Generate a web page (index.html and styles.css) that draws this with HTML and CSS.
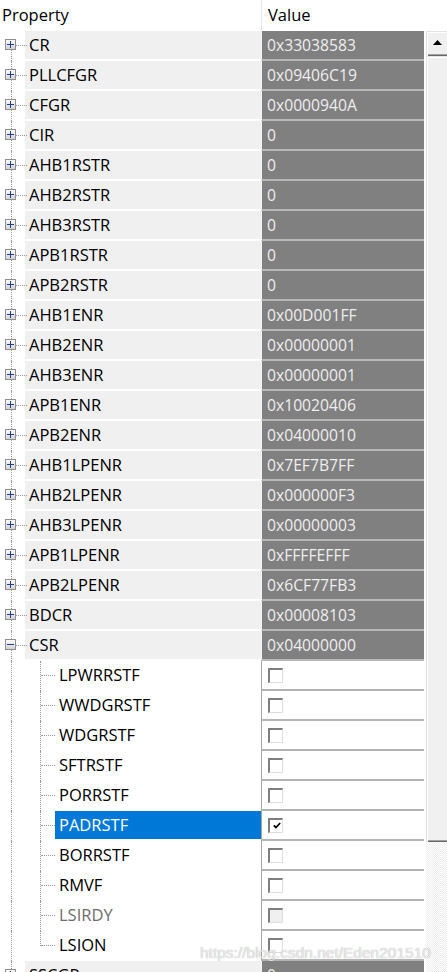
FILE: index.html
```html
<!DOCTYPE html>
<html>
<head>
<meta charset="utf-8">
<link rel="stylesheet" href="styles.css">
</head>
<body>
<div class="grid">
  <div class="header">
    <div class="h-prop">Property</div>
    <div class="h-val">Value</div>
  </div>
  <div class="body">
    <div class="rows">
      <div class="row first"><div class="tree"><span class="box plus"></span></div><div class="name">CR</div><div class="val">0x33038583</div></div>
      <div class="row"><div class="tree"><span class="box plus"></span></div><div class="name">PLLCFGR</div><div class="val">0x09406C19</div></div>
      <div class="row"><div class="tree"><span class="box plus"></span></div><div class="name">CFGR</div><div class="val">0x0000940A</div></div>
      <div class="row"><div class="tree"><span class="box plus"></span></div><div class="name">CIR</div><div class="val">0</div></div>
      <div class="row"><div class="tree"><span class="box plus"></span></div><div class="name">AHB1RSTR</div><div class="val">0</div></div>
      <div class="row"><div class="tree"><span class="box plus"></span></div><div class="name">AHB2RSTR</div><div class="val">0</div></div>
      <div class="row"><div class="tree"><span class="box plus"></span></div><div class="name">AHB3RSTR</div><div class="val">0</div></div>
      <div class="row"><div class="tree"><span class="box plus"></span></div><div class="name">APB1RSTR</div><div class="val">0</div></div>
      <div class="row"><div class="tree"><span class="box plus"></span></div><div class="name">APB2RSTR</div><div class="val">0</div></div>
      <div class="row"><div class="tree"><span class="box plus"></span></div><div class="name">AHB1ENR</div><div class="val">0x00D001FF</div></div>
      <div class="row"><div class="tree"><span class="box plus"></span></div><div class="name">AHB2ENR</div><div class="val">0x00000001</div></div>
      <div class="row"><div class="tree"><span class="box plus"></span></div><div class="name">AHB3ENR</div><div class="val">0x00000001</div></div>
      <div class="row"><div class="tree"><span class="box plus"></span></div><div class="name">APB1ENR</div><div class="val">0x10020406</div></div>
      <div class="row"><div class="tree"><span class="box plus"></span></div><div class="name">APB2ENR</div><div class="val">0x04000010</div></div>
      <div class="row"><div class="tree"><span class="box plus"></span></div><div class="name">AHB1LPENR</div><div class="val">0x7EF7B7FF</div></div>
      <div class="row"><div class="tree"><span class="box plus"></span></div><div class="name">AHB2LPENR</div><div class="val">0x000000F3</div></div>
      <div class="row"><div class="tree"><span class="box plus"></span></div><div class="name">AHB3LPENR</div><div class="val">0x00000003</div></div>
      <div class="row"><div class="tree"><span class="box plus"></span></div><div class="name">APB1LPENR</div><div class="val">0xFFFFEFFF</div></div>
      <div class="row"><div class="tree"><span class="box plus"></span></div><div class="name">APB2LPENR</div><div class="val">0x6CF77FB3</div></div>
      <div class="row"><div class="tree"><span class="box plus"></span></div><div class="name">BDCR</div><div class="val">0x00008103</div></div>
      <div class="row"><div class="tree"><span class="box"></span></div><div class="name">CSR</div><div class="val">0x04000000</div></div>

      <div class="row child"><div class="tree"><span class="hl"></span></div><div class="name">LPWRRSTF</div><div class="val"><span class="cb"></span></div></div>
      <div class="row child"><div class="tree"><span class="hl"></span></div><div class="name">WWDGRSTF</div><div class="val"><span class="cb"></span></div></div>
      <div class="row child"><div class="tree"><span class="hl"></span></div><div class="name">WDGRSTF</div><div class="val"><span class="cb"></span></div></div>
      <div class="row child"><div class="tree"><span class="hl"></span></div><div class="name">SFTRSTF</div><div class="val"><span class="cb"></span></div></div>
      <div class="row child"><div class="tree"><span class="hl"></span></div><div class="name">PORRSTF</div><div class="val"><span class="cb"></span></div></div>
      <div class="row child selected"><div class="tree"><span class="hl"></span></div><div class="name">PADRSTF</div><div class="val"><span class="cb"><svg class="check" width="8" height="7" viewBox="0 0 8 7"><path d="M0.8 3.4 L2.9 5.6 L7.2 1.0" fill="none" stroke="#000" stroke-width="1.7"/></svg></span></div></div>
      <div class="row child"><div class="tree"><span class="hl"></span></div><div class="name">BORRSTF</div><div class="val"><span class="cb"></span></div></div>
      <div class="row child"><div class="tree"><span class="hl"></span></div><div class="name">RMVF</div><div class="val"><span class="cb"></span></div></div>
      <div class="row child disabled"><div class="tree"><span class="hl"></span></div><div class="name">LSIRDY</div><div class="val"><span class="cb"></span></div></div>
      <div class="row child last"><div class="tree"><span class="hl"></span></div><div class="name">LSION</div><div class="val"><span class="cb"></span></div></div>

      <div class="row"><div class="tree"><span class="box plus"></span></div><div class="name">SSCGR</div><div class="val">0</div></div>
    </div>
    <div class="scrollbar">
      <div class="sb-btn"><svg width="9" height="5" viewBox="0 0 9 5"><polygon points="0,5 9,5 4.5,0" fill="#000"/></svg></div>
      <div class="sb-thumb"></div>
      <div class="sb-track"></div>
    </div>
  </div>
  <div class="watermark">https://blog.csdn.net/Eden201510</div>
</div>
</body>
</html>
```

FILE: styles.css
```css
html, body {
  margin: 0;
  padding: 0;
  background: #fff;
}

.grid {
  position: relative;
  width: 447px;
  height: 972px;
  overflow: hidden;
  font-family: "Open Sans", "Noto Sans", sans-serif;
  color: #000;
}

.header {
  display: flex;
  height: 31px;
  line-height: 29px;
  font-size: 16.5px;
}

.h-prop {
  box-sizing: border-box;
  width: 262px;
  padding-left: 2px;
  border-right: 1px solid #e5e5e5;
}

.h-val {
  padding-left: 6px;
}

.body {
  display: flex;
  align-items: flex-start;
}

.rows {
  width: 424px;
  flex: none;
}

.row {
  display: flex;
  align-items: flex-start;
  height: 30px;
}

.tree {
  position: relative;
  flex: none;
  width: 25px;
  height: 30px;
}

.tree::before {
  content: "";
  position: absolute;
  left: 11px;
  top: 0;
  bottom: 0;
  border-left: 1px dotted #9a9a9a;
}

.row.first .tree::before {
  top: 14px;
}

.tree::after {
  content: "";
  position: absolute;
  left: 16px;
  width: 11px;
  top: 14px;
  border-top: 1px dotted #9a9a9a;
}

.box {
  position: absolute;
  left: 5px;
  top: 8px;
  width: 11px;
  height: 11px;
  box-sizing: border-box;
  border: 1px solid #8f8f8f;
  background: linear-gradient(#fbfbfb, #d2d2d2);
  z-index: 1;
}

.box::before {
  content: "";
  position: absolute;
  left: 1px;
  top: 4px;
  width: 7px;
  height: 1px;
  background: #1f3d8c;
}

.box.plus::after {
  content: "";
  position: absolute;
  left: 4px;
  top: 1px;
  width: 1px;
  height: 7px;
  background: #1f3d8c;
}

.name {
  flex: none;
  box-sizing: border-box;
  width: 236px;
  height: 28px;
  line-height: 28px;
  padding-left: 4px;
  font-size: 16.5px;
  background: #f0f0f0;
  white-space: nowrap;
  overflow: hidden;
}

.val {
  flex: none;
  box-sizing: border-box;
  width: 163px;
  height: 30px;
  line-height: 28px;
  padding-left: 5px;
  font-size: 15.7px;
  background: #808080;
  color: #eeeeee;
  border-left: 1px solid #f4f4f4;
  border-bottom: 2px solid #b8b8b8;
  white-space: nowrap;
}

/* child rows */
.row.child .tree {
  width: 55px;
}

.row.child .tree::after {
  left: 40px;
  top: 0;
  bottom: 0;
  width: 0;
  border-top: none;
  border-left: 1px dotted #9a9a9a;
}

.row.child.last .tree::after {
  bottom: 15px;
}

.hl {
  position: absolute;
  left: 41px;
  top: 14px;
  width: 14px;
  border-top: 1px dotted #9a9a9a;
}

.row.child .name {
  width: 206px;
  background: #fff;
}

.row.child.selected .name {
  background: #0078d7;
  color: #fff;
}

.row.child.disabled .name {
  color: #6d6d6d;
}

.row.child .val {
  display: flex;
  align-items: center;
  height: 30px;
  padding-left: 6px;
  padding-bottom: 0;
  background: #fff;
  border-left: 1px solid #a6a6a6;
  border-bottom: 2px solid #b4b4b4;
}

.cb {
  display: flex;
  align-items: center;
  justify-content: center;
  box-sizing: border-box;
  width: 15px;
  height: 15px;
  padding-left: 2px;
  background: #fff;
  border-top: 2px solid #7f7f7f;
  border-left: 2px solid #7f7f7f;
  border-right: 1px solid #dedede;
  border-bottom: 1px solid #dedede;
}

.row.child.disabled .cb {
  background: #f0f0f0;
}

/* scrollbar */
.scrollbar {
  flex: none;
  margin-left: 2px;
  width: 21px;
  height: 941px;
  display: flex;
  flex-direction: column;
}

.sb-btn {
  flex: none;
  height: 25px;
  display: flex;
  align-items: center;
  justify-content: center;
  padding-left: 2px;
  padding-bottom: 2px;
  box-sizing: border-box;
  background: #f0f0f0;
  box-shadow: inset 1px 1px #e3e3e3, inset 2px 2px #fff, inset 0 -1px #696969, inset 0 -2px #a0a0a0;
}

.sb-thumb {
  flex: none;
  height: 786px;
  background: #f0f0f0;
  box-shadow: inset 1px 1px #e3e3e3, inset 2px 2px #fff, inset 0 -1px #696969, inset 0 -2px #a0a0a0;
}

.sb-track {
  flex: 1;
  background: repeating-conic-gradient(#ececec 0 25%, #ffffff 0 50%) 0 0 / 2px 2px;
}

.watermark {
  position: absolute;
  left: 200px;
  top: 945px;
  font-family: "Liberation Sans", Arial, sans-serif;
  font-size: 15.5px;
  line-height: 15.5px;
  color: rgba(255, 255, 255, 0.75);
  text-shadow: 0 0 1px rgba(110, 110, 110, 0.7);
  white-space: nowrap;
}
```
